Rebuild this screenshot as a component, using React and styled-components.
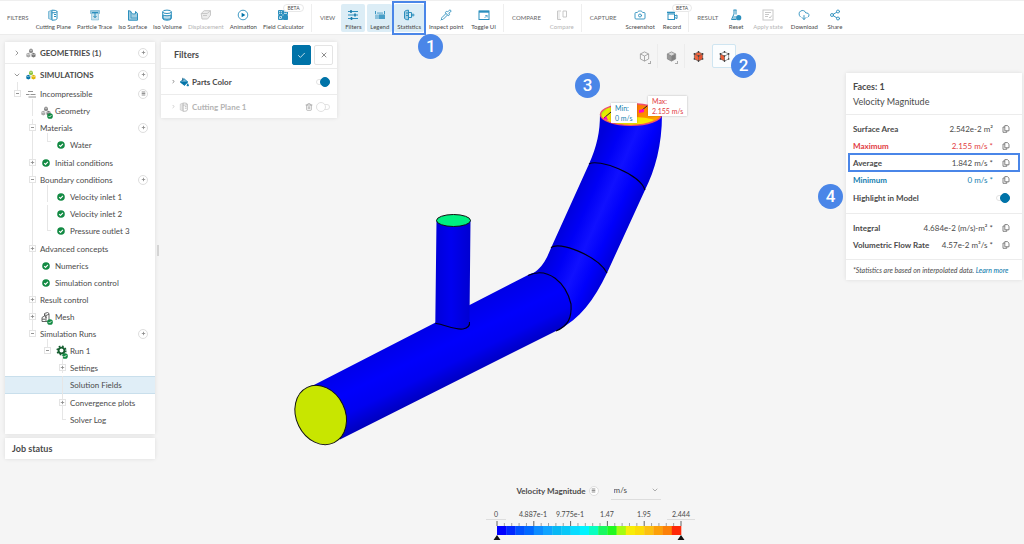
import { useState } from 'react';
import styled, { createGlobalStyle, css } from 'styled-components';
import { Camera, Check, ChevronDown, ChevronRight, CloudDownload, Pipette, Share2, Trash2, X } from 'lucide-react';

const colors = {
  text: '#4a4a4a',
  strong: '#333333',
  muted: '#b4b4b4',
  line: '#ececec',
  primary: '#0073a8',
  icon: '#2b8fbd',
  active: '#dcedf6',
  marker: '#4a86e8',
  danger: '#e23b42',
  ok: '#128a43',
};

const GlobalStyle = createGlobalStyle`
  *, *::before, *::after {
    box-sizing: border-box;
  }
  body {
    margin: 0;
    background: #f5f5f5;
    color: ${colors.text};
    font-family: Lato, 'Liberation Sans', sans-serif;
    font-size: 8px;
    line-height: 10px;
  }
  button, input, select {
    font: inherit;
    color: inherit;
  }
  button {
    padding: 0;
    border: none;
    background: none;
    cursor: pointer;
  }
  ul, dl, dd, p, h2 {
    margin: 0;
    padding: 0;
    list-style: none;
  }
  svg {
    display: block;
    flex: none;
  }
`;

const Page = styled.div`
  display: flex;
  flex-direction: column;
  min-height: 100vh;
`;

/* Toolbar */

const Toolbar = styled.header`
  display: flex;
  align-items: center;
  height: 35px;
  padding-left: 7px;
  background: #ffffff;
  border-top: 1px solid #efefef;
  border-bottom: 1px solid #ececec;
`;

const ToolGroup = styled.div`
  display: flex;
  align-items: center;
  gap: ${(p) => (p.$tight ? '0' : '2px')};
  padding-right: 4px;
  margin-right: 8px;
  border-right: 1px solid #eeeeee;
  &:last-child {
    border-right: none;
  }
`;

const GroupName = styled.span`
  margin-right: 4px;
  font-size: 6px;
  color: #666666;
`;

const ToolButton = styled.button`
  position: relative;
  display: flex;
  flex-direction: column;
  align-items: center;
  gap: 1px;
  min-width: 24px;
  height: 28px;
  padding: 5px 3px 0;
  border-radius: 2px;
  font-size: 6px;
  line-height: 10px;
  white-space: nowrap;
  color: ${(p) => (p.disabled ? colors.muted : colors.text)};
  background: ${(p) => (p.$active ? colors.active : 'transparent')};
  svg {
    color: ${(p) => (p.disabled ? '#c8c8c8' : colors.icon)};
  }
  ${(p) =>
    p.$marked &&
    css`
      &::after {
        content: '';
        position: absolute;
        inset: -3px -2px;
        border: 2px solid ${colors.marker};
      }
    `}
`;

const Beta = styled.span`
  position: absolute;
  top: 0;
  left: 50%;
  padding: 0 3px;
  border: 1px solid #e8e8e8;
  border-radius: 4px;
  background: #ffffff;
  font-size: 5px;
  line-height: 6px;
  color: ${colors.text};
`;

const Marker = styled.span`
  position: absolute;
  z-index: 5;
  top: ${(p) => p.$top}px;
  left: ${(p) => p.$left}px;
  width: 25px;
  height: 25px;
  border-radius: 50%;
  background: ${colors.marker};
  color: #ffffff;
  font-family: Roboto, sans-serif;
  font-size: 17px;
  font-weight: 500;
  line-height: 25px;
  text-align: center;
`;

/* Workspace */

const Workspace = styled.main`
  position: relative;
  flex: 1;
  display: flex;
  align-items: stretch;
  padding: 7px 2px 3px 5px;
`;

const SidebarColumn = styled.div`
  position: relative;
  display: flex;
  align-items: center;
  align-self: flex-start;
`;

const Sidebar = styled.aside`
  display: flex;
  flex-direction: column;
  gap: 4px;
  width: 150px;
`;

const Handle = styled.div`
  width: 2px;
  height: 11px;
  margin: 0 2px;
  border-left: 1px solid #d4d4d4;
  border-right: 1px solid #d4d4d4;
`;

const Card = styled.section`
  background: #ffffff;
  box-shadow: 0 0 4px rgba(0, 0, 0, 0.1);
`;

const SideHeader = styled.div`
  display: flex;
  align-items: center;
  height: ${(p) => (p.$line ? '22px' : '21px')};
  padding: 0 7px 0 8px;
  border-bottom: ${(p) => (p.$line ? `1px solid ${colors.line}` : 'none')};
  font-size: 8px;
  font-weight: 700;
  color: ${colors.text};
`;

const HeaderIcon = styled.span`
  display: flex;
  justify-content: center;
  width: 10px;
  margin: 0 4px 0 5px;
`;

const RoundButton = styled.button`
  display: flex;
  align-items: center;
  justify-content: center;
  width: 10px;
  height: 10px;
  margin-left: ${(p) => (p.$inline ? '0' : 'auto')};
  border: 1px solid #dedede;
  border-radius: 50%;
  background: #ffffff;
`;

const Tree = styled.ul`
  && {
    padding-bottom: ${(p) => (p.$root ? '3px' : '1px')};
  }
`;

const TreeItem = styled.li`
  position: relative;
  &::before {
    content: '';
    position: absolute;
    top: ${(p) => (p.$first ? '-3px' : '0')};
    left: ${(p) => 12 + p.$level * 15}px;
    width: 4px;
    height: ${(p) => (p.$last ? '9px' : '100%')};
    border-left: 1px solid #e6e6e6;
    border-bottom: ${(p) => (p.$last ? '1px solid #e6e6e6' : 'none')};
  }
`;

const TreeRow = styled.div`
  display: flex;
  align-items: center;
  min-height: 17px;
  padding-left: ${(p) => 9 + p.$level * 15}px;
  padding-right: 7px;
  white-space: nowrap;
  ${(p) =>
    p.$selected &&
    css`
      background: #e0eef7;
      border-top: 1px solid #c9dfec;
      border-bottom: 1px solid #c9dfec;
      min-height: 18px;
    `}
`;

const Expander = styled.button`
  position: relative;
  display: flex;
  align-items: center;
  justify-content: center;
  width: 7px;
  height: 7px;
  margin-right: 4px;
  border: 1px solid #e4e4e4;
  background: #ffffff;
`;

const ExpanderGap = styled.span`
  width: 11px;
`;

const ItemIcon = styled.span`
  position: relative;
  display: flex;
  justify-content: center;
  width: 12px;
  margin-right: 3px;
`;

const StatusDot = styled.span`
  position: absolute;
  right: -1px;
  bottom: -3px;
`;

const JobStatus = styled(Card)`
  padding: 6px 7px 5px;
  font-size: 9px;
  font-weight: 700;
`;

/* Stage */

const Stage = styled.div`
  position: relative;
  flex: 1;
  display: flex;
  flex-direction: column;
  justify-content: space-between;
`;

const StageTop = styled.div`
  display: flex;
  align-items: flex-start;
`;

const FiltersCard = styled(Card)`
  width: 176px;
`;

const FiltersHeader = styled.div`
  display: flex;
  align-items: center;
  gap: 3px;
  height: 27px;
  padding: 0 4px 0 13px;
  border-bottom: 1px solid ${colors.line};
`;

const FiltersTitle = styled.h2`
  flex: 1;
  font-size: 9px;
  font-weight: 700;
  color: ${colors.text};
`;

const SquareButton = styled.button`
  display: flex;
  align-items: center;
  justify-content: center;
  width: 19px;
  height: 20px;
  border: 1px solid ${(p) => (p.$primary ? colors.primary : '#e4e4e4')};
  border-radius: 2px;
  background: ${(p) => (p.$primary ? colors.primary : '#ffffff')};
  color: ${(p) => (p.$primary ? '#ffffff' : '#555555')};
`;

const FilterRow = styled.div`
  display: flex;
  align-items: center;
  gap: 3px;
  height: 25px;
  padding: 0 7px 0 10px;
  color: ${(p) => (p.$off ? colors.muted : colors.text)};
  & + & {
    height: 24px;
    border-top: 1px solid ${colors.line};
  }
`;

const FilterName = styled.label`
  flex: 1;
  font-size: 8px;
  font-weight: 700;
`;

const Switch = styled.input`
  appearance: none;
  position: relative;
  width: 14px;
  height: 10px;
  margin: 0;
  &::before {
    content: '';
    position: absolute;
    inset: 2px 0;
    border: 1px solid #e2e2e2;
    border-radius: 3px;
  }
  &::after {
    content: '';
    position: absolute;
    top: 0;
    left: 0;
    width: 10px;
    height: 10px;
    border: 1px solid #e2e2e2;
    border-radius: 50%;
    background: #ffffff;
  }
  &:checked::after {
    left: 4px;
    border-color: ${colors.primary};
    background: ${colors.primary};
  }
`;

const ViewModes = styled.div`
  display: flex;
  margin-left: auto;
  margin-right: 110px;
  padding-top: 2px;
`;

const ModeButton = styled.button`
  position: relative;
  display: flex;
  align-items: center;
  justify-content: center;
  width: 27px;
  height: 24px;
  border-right: 1px solid ${(p) => (p.$last ? 'transparent' : '#ececec')};
  ${(p) =>
    p.$active &&
    css`
      width: 24px;
      border: 1px solid #cfe5f1;
      border-radius: 2px;
      background: #fbfdfe;
    `}
`;

const MoreCorner = styled.span`
  position: absolute;
  right: 6px;
  bottom: 4px;
  width: 3px;
  height: 3px;
  border-right: 1px solid #aaaaaa;
  border-bottom: 1px solid #aaaaaa;
`;

const StatsCard = styled(Card)`
  position: relative;
  width: 176px;
  margin-top: 31px;
`;

const StatsHead = styled.div`
  display: grid;
  gap: 4px;
  padding: 8px 7px 7px;
  font-size: 9px;
  line-height: 11px;
`;

const StatsTitle = styled.h2`
  font-size: 9px;
  font-weight: 700;
`;

const StatsBody = styled.div`
  padding: 5px 3px 6px;
  border-top: 1px solid ${colors.line};
`;

const StatRow = styled.div`
  display: flex;
  align-items: center;
  height: ${(p) => (p.$tall ? '19px' : '17px')};
  padding: 0 9px 0 4px;
  white-space: nowrap;
  color: ${(p) => p.$color || colors.text};
  outline: ${(p) => (p.$marked ? `2px solid ${colors.marker}` : 'none')};
  outline-offset: -1px;
`;

const StatName = styled.span`
  flex: 1;
  font-weight: 700;
`;

const CopyButton = styled.button`
  margin-left: 9px;
  color: #666666;
`;

const StatsNote = styled.p`
  padding: 5px 7px 5px;
  border-top: 1px solid ${colors.line};
  font-size: 7px;
  line-height: 10px;
  font-style: italic;
  a {
    color: ${colors.primary};
    text-decoration: none;
  }
`;

/* Scene */

const Scene = styled.svg`
  position: absolute;
  inset: 0;
  width: 100%;
  height: 100%;
`;

const ValueTag = styled.div`
  position: absolute;
  top: ${(p) => p.$top}px;
  left: ${(p) => p.$left}px;
  padding: 0 4px;
  background: #ffffff;
  box-shadow: 0 0 2px rgba(0, 0, 0, 0.25);
  color: ${(p) => p.$color};
  font-size: 7px;
  line-height: 10px;
`;

/* Legend */

const Legend = styled.section`
  position: relative;
  display: flex;
  flex-direction: column;
  align-items: center;
  margin-right: 6px;
`;

const LegendTitle = styled.div`
  display: flex;
  align-items: center;
  gap: 3px;
  height: 19px;
  margin-bottom: 9px;
  font-weight: 700;
`;

const UnitBox = styled.span`
  position: relative;
  width: 50px;
  margin-left: 9px;
  border-bottom: 1px solid #dddddd;
  font-weight: 400;
  svg {
    position: absolute;
    top: 5px;
    right: 2px;
    color: #888888;
    pointer-events: none;
  }
`;

const UnitSelect = styled.select`
  appearance: none;
  width: 100%;
  height: 18px;
  padding: 0 3px;
  border: none;
  background: transparent;
`;

const LegendValues = styled.div`
  display: grid;
  grid-template-columns: repeat(6, 37px);
  text-align: center;
  font-size: 7px;
  line-height: 10px;
`;

const BoundInput = styled.input`
  justify-self: center;
  width: ${(p) => p.$width}px;
  height: 11px;
  padding: 0;
  border: none;
  border-bottom: 1px solid #dddddd;
  background: transparent;
  text-align: center;
`;

/* Icons */

const PlusGlyph = () => (
  <svg width="5" height="5" viewBox="0 0 5 5" stroke="#888" strokeWidth="0.800">
    <path d="M2.500 0.800v3.400M0.800 2.500h3.400" />
  </svg>
);

const MinusGlyph = () => (
  <svg width="5" height="5" viewBox="0 0 5 5" stroke="#888" strokeWidth="0.900">
    <path d="M1 2.500h3" />
  </svg>
);

const MenuGlyph = () => (
  <svg width="5" height="5" viewBox="0 0 5 5" stroke="#777" strokeWidth="0.800">
    <path d="M0.700 1h3.600M0.700 2.500h3.600M0.700 4h3.600" />
  </svg>
);

const CheckDot = ({ size = 8 }) => (
  <svg width={size} height={size} viewBox="0 0 8 8">
    <circle cx="4" cy="4" r="3.800" fill={colors.ok} />
    <path d="M2.200 4.100l1.300 1.300 2.400-2.600" fill="none" stroke="#fff" strokeWidth="1.100" />
  </svg>
);

const CopyIcon = () => (
  <svg width="8" height="8" viewBox="0 0 8 8" fill="none" stroke="currentColor" strokeWidth="0.800">
    <path d="M2.800 0.600h2.600l1.600 1.600v3.600H2.800zM2.800 2H1v5.300h3.800V5.800" />
  </svg>
);

const Glyph = ({ children, size = 12 }) => (
  <svg width={size} height={size} viewBox="0 0 12 12" fill="none" stroke="currentColor" strokeWidth="1">
    {children}
  </svg>
);

const CuttingPlaneIcon = ({ size }) => (
  <Glyph size={size}>
    <path d="M1.500 2.500l3-1.300v9.600l-3-1.300z" fill="currentColor" fillOpacity="0.350" strokeOpacity="0.500" />
    <path d="M5 1.200c3 0 5 .4 5 1.400v7c0 1-2 1.600-5 1.600zM5 3.800c3 0 5-.4 5-1.200" />
    <path d="M7 5.500h2M7 7.500h2" />
  </Glyph>
);

const ParticleTraceIcon = () => (
  <Glyph>
    <path d="M1.500 1.500h9v3h-9z" fill="currentColor" fillOpacity="0.500" strokeOpacity="0.400" />
    <path d="M2.500 5v6h7V5" fill="currentColor" fillOpacity="0.250" strokeOpacity="0.350" />
    <path d="M3 3.500h6M6 3.500v5M4.500 7L6 8.700 7.500 7" />
  </Glyph>
);

const IsoSurfaceIcon = () => (
  <Glyph>
    <path d="M1.500 1.500v9.700h9V4.300l-2-1.800v2.200C6 5.500 4 4.500 4 2.500z" fill="currentColor" fillOpacity="0.450" />
    <path d="M4 3v6h6" strokeOpacity="0.700" />
  </Glyph>
);

const IsoVolumeIcon = () => (
  <Glyph>
    <ellipse cx="6" cy="2.800" rx="4.300" ry="1.700" />
    <path d="M1.700 2.800v6.600c0 1 1.900 1.800 4.300 1.800s4.300-.8 4.300-1.800V2.800" />
    <path d="M2 6c2 1 6 1 8 0v3.400c-1.500 1.200-6.500 1.200-8 0z" fill="currentColor" fillOpacity="0.300" />
  </Glyph>
);

const DisplacementIcon = () => (
  <Glyph>
    <path d="M1.200 4.500l3-2.800h6.300v4.500l-3 3.800H2z" fill="currentColor" fillOpacity="0.350" />
    <path d="M1.200 4.500h6l3.300-2.800M3 6.500h4" />
  </Glyph>
);

const AnimationIcon = () => (
  <Glyph>
    <circle cx="6" cy="6" r="4.800" strokeWidth="0.900" />
    <path d="M4.600 3.700v4.600L8.400 6z" fill="#0073a8" stroke="none" />
  </Glyph>
);

const CalculatorIcon = () => (
  <Glyph>
    <path d="M1.500 1.500h4v4h-4zM6.500 1.500h4v4h-4zM1.500 6.500h4v4h-4z" fill="currentColor" fillOpacity="0.350" />
    <path d="M6.500 6.500h4v4h-4z" fill="currentColor" />
    <path d="M2.300 3.500h2.400M3.500 2.300v2.400M2.500 7.500l2 2M7.300 3.500h2.400" />
  </Glyph>
);

const SlidersIcon = () => (
  <Glyph>
    <path d="M1 2.500h10M1 6h10M1 9.500h10" strokeWidth="1.100" />
    <path d="M4 1v3M8 4.500v3M4.500 8v3" strokeWidth="1.600" stroke="#1d7aa8" />
  </Glyph>
);

const LegendIcon = () => (
  <Glyph>
    <path d="M1 5.500h10V10H1z" fill="currentColor" stroke="none" fillOpacity="0.450" />
    <path d="M5 5.500h6V10H5z" fill="currentColor" stroke="none" fillOpacity="0.700" />
    <path d="M1.500 5V2M4 5V3.200M6 5V3.200M8 5V3.200M10.500 5V2" strokeWidth="0.900" />
  </Glyph>
);

const StatisticsIcon = () => (
  <Glyph>
    <path d="M5.500 1.200v9.600C3 10.800 1.500 10 1.500 9V3c0-1 1.500-1.800 4-1.800z" fill="currentColor" fillOpacity="0.350" />
    <path d="M3 4h2M3 6.500h2M6 3.500h2.500v5H6M8.500 6h3M10 4.500v3" />
  </Glyph>
);

const ToggleUiIcon = () => (
  <Glyph>
    <rect x="1" y="2" width="10" height="8.500" />
    <path d="M1 2.700h10" strokeWidth="2" />
    <path d="M6.500 9L9 6.500M9.200 8.500v-2h-2" strokeWidth="0.700" />
  </Glyph>
);

const CompareIcon = () => (
  <Glyph>
    <path d="M5 2H1.500v8.500H5M7 2h3.500v6H7z" />
    <path d="M2 3h2v7H2z" fill="currentColor" fillOpacity="0.300" stroke="none" />
  </Glyph>
);

const RecordIcon = () => (
  <Glyph>
    <rect x="2" y="5" width="6.500" height="5.500" />
    <path d="M8.500 7l2.500-1v3.500l-2.500-1" />
    <path d="M1 3.500h8" strokeWidth="1.600" />
  </Glyph>
);

const ResetIcon = () => (
  <Glyph>
    <path d="M3.500 1h3M4 1v4L1.500 10.500h5M6 1v4.500" />
    <path d="M3.500 7h3v3h-4z" fill="currentColor" fillOpacity="0.500" stroke="none" />
    <circle cx="8.700" cy="8.700" r="2.600" fill="currentColor" stroke="none" />
  </Glyph>
);

const ApplyStateIcon = () => (
  <Glyph>
    <rect x="1" y="1" width="10" height="10" />
    <path d="M3 3.500h6M3 5.500h4M3 7.500h3M7 8l1 1 1.800-2.500" />
  </Glyph>
);

const CubesIcon = ({ top = '#8a8a8a', left = '#a8a8a8', right = '#777777' }) => (
  <svg width="10" height="10" viewBox="0 0 10 10">
    <path d="M3 1.500l2-1 2 1v2.700l-2 1-2-1z" fill={top} />
    <path d="M0.300 5.800l2-1 2 1v2.700l-2 1-2-1z" fill={left} />
    <path d="M5.500 5.800l2-1 2 1v2.700l-2 1-2-1z" fill={right} />
    <path d="M3 1.500l2 1 2-1M0.300 5.800l2 1 2-1M5.500 5.800l2 1 2-1" fill="none" stroke="#fff" strokeWidth="0.500" />
  </svg>
);

const FlowIcon = () => (
  <svg width="10" height="8" viewBox="0 0 10 8" stroke="#888" strokeWidth="0.900">
    <path d="M2 1.500h5M0 4.500h3.500M4.500 4.500h5M2.500 7h7.500" />
  </svg>
);

const MeshIcon = () => (
  <svg width="10" height="10" viewBox="0 0 10 10" fill="none" stroke="#555" strokeWidth="0.900">
    <path d="M3.500 4V1.500l3-1 1.500 1v7l-2 1H1V5.500L3.500 4l1.500 1v4M3.500 2.500L5 3.500 8 2.200M5 3.500V6M1 7.200h3.500" />
  </svg>
);

const GearIcon = () => (
  <svg width="11" height="11" viewBox="0 0 12 12" fill="none" stroke="#135c2e">
    <circle cx="6" cy="6" r="3.200" strokeWidth="2" />
    <circle cx="6" cy="6" r="4.800" strokeWidth="1.500" strokeDasharray="1.900 1.870" />
  </svg>
);

const BucketIcon = () => (
  <svg width="10" height="10" viewBox="0 0 12 12" fill="none" stroke={colors.primary}>
    <path d="M1.500 6l4.500-4 4.500 4-4 4z" fill="#7db9d6" />
    <path d="M2 6h8l-3.500 3.500z" fill={colors.primary} />
    <path d="M4.500 1v3.500" stroke="#0b4f74" />
    <path d="M10.500 8l1 2.500h-2z" fill={colors.primary} />
  </svg>
);

const CubeIcon = ({ top, left, right, edge = '#999999', dots }) => (
  <svg width="11" height="11" viewBox="0 0 12 12">
    <path d="M6 1l4.500 2.200L6 5.500 1.500 3.200z" fill={top} />
    <path d="M1.500 3.200L6 5.500V11L1.500 8.700z" fill={left} />
    <path d="M10.500 3.200L6 5.500V11l4.500-2.300z" fill={right} />
    <path
      d="M6 1l4.500 2.200v5.500L6 11 1.500 8.700V3.200zM1.500 3.200L6 5.500l4.500-2.300M6 5.500V11"
      fill="none"
      stroke={edge}
      strokeWidth={dots ? 0.6 : 0.9}
    />
    {dots &&
      [[6, 1], [10.5, 3.2], [10.5, 8.7], [6, 11], [1.5, 8.7], [1.5, 3.2], [6, 5.5]].map(([x, y]) => (
        <circle key={`${x}-${y}`} cx={x} cy={y} r="0.900" fill="#333" />
      ))}
  </svg>
);

/* Data */

const lucide = (Icon, size = 12) => () => <Icon size={size} strokeWidth={1.8} />;

const toolGroups = [
  {
    name: 'FILTERS',
    tight: true,
    tools: [
      { label: 'Cutting Plane', Icon: CuttingPlaneIcon },
      { label: 'Particle Trace', Icon: ParticleTraceIcon },
      { label: 'Iso Surface', Icon: IsoSurfaceIcon },
      { label: 'Iso Volume', Icon: IsoVolumeIcon },
      { label: 'Displacement', Icon: DisplacementIcon, disabled: true },
      { label: 'Animation', Icon: AnimationIcon },
      { label: 'Field Calculator', Icon: CalculatorIcon, beta: true },
    ],
  },
  {
    name: 'VIEW',
    tools: [
      { label: 'Filters', Icon: SlidersIcon, active: true },
      { label: 'Legend', Icon: LegendIcon, active: true },
      { label: 'Statistics', Icon: StatisticsIcon, active: true, marker: 1 },
      { label: 'Inspect point', Icon: lucide(Pipette) },
      { label: 'Toggle UI', Icon: ToggleUiIcon },
    ],
  },
  { name: 'COMPARE', tools: [{ label: 'Compare', Icon: CompareIcon, disabled: true }] },
  {
    name: 'CAPTURE',
    tools: [
      { label: 'Screenshot', Icon: lucide(Camera) },
      { label: 'Record', Icon: RecordIcon, beta: true },
    ],
  },
  {
    name: 'RESULT',
    tools: [
      { label: 'Reset', Icon: ResetIcon },
      { label: 'Apply state', Icon: ApplyStateIcon, disabled: true },
      { label: 'Download', Icon: lucide(CloudDownload) },
      { label: 'Share', Icon: lucide(Share2) },
    ],
  },
];

const treeData = [
  {
    label: 'Incompressible',
    icon: <FlowIcon />,
    inset: true,
    open: true,
    action: 'menu',
    children: [
      { label: 'Geometry', icon: <CubesIcon />, done: true },
      { label: 'Materials', open: true, action: 'add', children: [{ label: 'Water', icon: <CheckDot /> }] },
      { label: 'Initial conditions', icon: <CheckDot />, open: false },
      {
        label: 'Boundary conditions',
        open: true,
        action: 'add',
        children: [
          { label: 'Velocity inlet 1', icon: <CheckDot /> },
          { label: 'Velocity inlet 2', icon: <CheckDot /> },
          { label: 'Pressure outlet 3', icon: <CheckDot /> },
        ],
      },
      { label: 'Advanced concepts', open: false },
      { label: 'Numerics', icon: <CheckDot /> },
      { label: 'Simulation control', icon: <CheckDot /> },
      { label: 'Result control', open: false },
      { label: 'Mesh', icon: <MeshIcon />, done: true, open: false },
      {
        label: 'Simulation Runs',
        open: true,
        action: 'add',
        children: [
          {
            label: 'Run 1',
            icon: <GearIcon />,
            done: true,
            open: true,
            children: [
              { label: 'Settings', open: false },
              { label: 'Solution Fields', selected: true },
              { label: 'Convergence plots', open: false },
              { label: 'Solver Log' },
            ],
          },
        ],
      },
    ],
  },
];

const fieldStats = [
  { name: 'Surface Area', value: '2.542e-2 m²' },
  { name: 'Maximum', value: '2.155 m/s *', color: colors.danger },
  { name: 'Average', value: '1.842 m/s *', marked: true },
  { name: 'Minimum', value: '0 m/s *', color: '#1580b0' },
];

const integralStats = [
  { name: 'Integral', value: '4.684e-2 (m/s)-m² *' },
  { name: 'Volumetric Flow Rate', value: '4.57e-2 m³/s *' },
];

const scaleColors = [
  '#0000ff', '#0028ff', '#0050ff', '#0068ff', '#0c8cff', '#10a4ff', '#08b8f4', '#08c8f8', '#08dcff', '#00f4ff',
  '#08ffc0', '#18f860', '#20f820', '#a4fc10', '#f8ec08', '#fcdc08', '#fcc010', '#fca008', '#fc8008', '#ff2808',
];

/* Parts */

function ToolbarItem({ tool }) {
  const { label, Icon, active, disabled, beta, marker } = tool;
  return (
    <ToolButton type="button" $active={active} disabled={disabled} $marked={marker}>
      <Icon />
      {label}
      {beta && <Beta>BETA</Beta>}
      {marker && <Marker $top={30} $left={24}>{marker}</Marker>}
    </ToolButton>
  );
}

function TreeNode({ node, level, first, last }) {
  const [open, setOpen] = useState(Boolean(node.open));
  const hasExpander = node.open !== undefined;
  return (
    <TreeItem $level={level} $first={first} $last={last}>
      <TreeRow $level={level} $selected={node.selected}>
        {hasExpander ? (
          <Expander type="button" aria-label={node.label} onClick={() => setOpen(!open)}>
            {open ? <MinusGlyph /> : <PlusGlyph />}
          </Expander>
        ) : (
          <ExpanderGap />
        )}
        {node.icon && (
          <ItemIcon>
            {node.icon}
            {node.done && (
              <StatusDot>
                <CheckDot size={6} />
              </StatusDot>
            )}
          </ItemIcon>
        )}
        {node.label}
        {node.action && (
          <RoundButton type="button" aria-label={node.action}>
            {node.action === 'add' ? <PlusGlyph /> : <MenuGlyph />}
          </RoundButton>
        )}
      </TreeRow>
      {open && node.children && <TreeList nodes={node.children} level={level + 1} />}
    </TreeItem>
  );
}

function TreeList({ nodes, level }) {
  return (
    <Tree $root={level === 0}>
      {nodes.map((node, i) => (
        <TreeNode key={node.label} node={node} level={level} first={i === 0} last={i === nodes.length - 1} />
      ))}
    </Tree>
  );
}

function StatLine({ stat }) {
  return (
    <StatRow $color={stat.color} $marked={stat.marked}>
      <StatName>{stat.name}</StatName>
      <span>{stat.value}</span>
      <CopyButton type="button" aria-label={`Copy ${stat.name}`}>
        <CopyIcon />
      </CopyButton>
    </StatRow>
  );
}

function PipeModel() {
  return (
    <Scene viewBox="0 35 1024 509" aria-hidden="true">
      <defs>
        <linearGradient id="main" gradientUnits="userSpaceOnUse" x1="420" y1="330" x2="447" y2="386">
          <stop offset="0" stopColor="#0000e8" />
          <stop offset="0.400" stopColor="#0000fc" />
          <stop offset="0.700" stopColor="#0000f0" />
          <stop offset="1" stopColor="#0000c0" />
        </linearGradient>
        <linearGradient id="riser" gradientUnits="userSpaceOnUse" x1="570" y1="206" x2="626" y2="231">
          <stop offset="0" stopColor="#0000dc" />
          <stop offset="0.250" stopColor="#0000f6" />
          <stop offset="0.500" stopColor="#1010ff" />
          <stop offset="0.750" stopColor="#0000fc" />
          <stop offset="1" stopColor="#0000d8" />
        </linearGradient>
        <linearGradient id="branch" x1="0" x2="1" y1="0" y2="0">
          <stop offset="0" stopColor="#0000d8" />
          <stop offset="0.450" stopColor="#0000f0" />
          <stop offset="1" stopColor="#0000d0" />
        </linearGradient>
        <linearGradient id="outlet" x1="0" x2="1" y1="0" y2="0.300">
          <stop offset="0" stopColor="#28e820" />
          <stop offset="0.180" stopColor="#e4f000" />
          <stop offset="0.400" stopColor="#ffd000" />
          <stop offset="0.600" stopColor="#ff7800" />
          <stop offset="1" stopColor="#ffa000" />
        </linearGradient>
      </defs>
      <path
        d="M528 276L535 272C543 266 547 258 551 248L589 164C597 146 600 132 600 114L662 114C662 146 655 170 645 190L607 273C594 300 580 319 558 330Z"
        fill="url(#riser)"
      />
      <path d="M312 386L530 274C548 267 566 283 571 304C572 318 568 326 558 330L340 439.500Z" fill="url(#main)" />
      <path d="M436.500 220L435.300 323.300C446 325 454 330 463 329C468 328 470 325 469.500 319L470.500 220Z" fill="url(#branch)" />
      <g fill="none" stroke="#000018" strokeWidth="1.100">
        <path d="M589 164C598 158 640 174 645 190" />
        <path d="M551 248C558 240 598 256 607 273" />
        <path d="M528 275.500C548 266 566 283 571 304C572 318 568 326 556 331" />
        <path d="M435.300 323.300C446 325 454 330 463 329C468 328 470 325 469.500 322" />
      </g>
      <ellipse cx="320.700" cy="415" rx="24.500" ry="30.700" transform="rotate(-26 320.700 415)" fill="#c8e600" stroke="#111" />
      <ellipse cx="453.500" cy="220.500" rx="17" ry="6" fill="#00f080" stroke="#111" />
      <ellipse cx="631" cy="114.500" rx="30.500" ry="10.800" fill="url(#outlet)" stroke="#f0506c" strokeWidth="1.500" />
      <path d="M608 121c12 5 36 5 46-1-10-4-36-4-46 1z" fill="#f8e800" />
      <path d="M604 118l7-6M641 111l6-5" stroke="#222" />
      <path d="M639 110l5-1v3l-5 1zM603 119l3-3 2 4z" fill="#f0c" />
    </Scene>
  );
}

function ColorScale() {
  const step = 184 / scaleColors.length;
  return (
    <svg width="196" height="21" viewBox="0 0 196 21">
      {Array.from({ length: 26 }, (_, i) => (
        <path
          key={i}
          d={`M${6 + i * 7.36} ${i % 5 ? 3 : 1}V6`}
          stroke={i % 5 ? '#999' : '#555'}
          strokeWidth="0.900"
        />
      ))}
      {scaleColors.map((color, i) => (
        <rect key={color} x={6 + i * step} y="6" width={step + 0.3} height="9" fill={color} />
      ))}
      <path d="M6 15l3.500 5h-7zM190 15l3.500 5h-7z" fill="#111" />
    </svg>
  );
}

function App() {
  const [partsColor, setPartsColor] = useState(true);
  const [cuttingPlane, setCuttingPlane] = useState(false);
  const [highlight, setHighlight] = useState(true);

  return (
    <Page>
      <GlobalStyle />
      <Toolbar>
        {toolGroups.map((group) => (
          <ToolGroup key={group.name} $tight={group.tight}>
            <GroupName>{group.name}</GroupName>
            {group.tools.map((tool) => (
              <ToolbarItem key={tool.label} tool={tool} />
            ))}
          </ToolGroup>
        ))}
      </Toolbar>
      <Workspace>
        <PipeModel />
        <SidebarColumn>
          <Sidebar>
            <Card>
              <SideHeader $line>
                <ChevronRight size={8} color="#666" />
                <HeaderIcon>
                  <CubesIcon />
                </HeaderIcon>
                GEOMETRIES (1)
                <RoundButton type="button" aria-label="Add geometry">
                  <PlusGlyph />
                </RoundButton>
              </SideHeader>
              <SideHeader>
                <ChevronDown size={8} color="#666" />
                <HeaderIcon>
                  <CubesIcon top="#8cc63f" left="#0073a8" right="#e0b400" />
                </HeaderIcon>
                SIMULATIONS
                <RoundButton type="button" aria-label="Add simulation">
                  <PlusGlyph />
                </RoundButton>
              </SideHeader>
              <TreeList nodes={treeData} level={0} />
            </Card>
            <JobStatus>Job status</JobStatus>
          </Sidebar>
          <Handle />
        </SidebarColumn>
        <Stage>
          <StageTop>
            <FiltersCard>
              <FiltersHeader>
                <FiltersTitle>Filters</FiltersTitle>
                <SquareButton type="button" aria-label="Apply" $primary>
                  <Check size={9} />
                </SquareButton>
                <SquareButton type="button" aria-label="Close">
                  <X size={8} />
                </SquareButton>
              </FiltersHeader>
              <FilterRow>
                <ChevronRight size={5} strokeWidth={3} />
                <BucketIcon />
                <FilterName htmlFor="parts-color">Parts Color</FilterName>
                <Switch
                  id="parts-color"
                  type="checkbox"
                  checked={partsColor}
                  onChange={() => setPartsColor(!partsColor)}
                />
              </FilterRow>
              <FilterRow $off>
                <ChevronRight size={5} strokeWidth={3} />
                <CuttingPlaneIcon size={10} />
                <FilterName htmlFor="cutting-plane">Cutting Plane 1</FilterName>
                <button type="button" aria-label="Delete">
                  <Trash2 size={8} color="#999" />
                </button>
                <Switch
                  id="cutting-plane"
                  type="checkbox"
                  checked={cuttingPlane}
                  onChange={() => setCuttingPlane(!cuttingPlane)}
                />
              </FilterRow>
            </FiltersCard>
            <ViewModes>
              <ModeButton type="button" aria-label="Wireframe">
                <CubeIcon top="none" left="none" right="none" />
                <MoreCorner />
              </ModeButton>
              <ModeButton type="button" aria-label="Solid">
                <CubeIcon top="#d8d8d8" left="#999999" right="#808080" edge="#888888" />
                <MoreCorner />
              </ModeButton>
              <ModeButton type="button" aria-label="Select volumes" $last>
                <CubeIcon top="#f0643c" left="#f0643c" right="#e85430" edge="#444444" dots />
              </ModeButton>
              <ModeButton type="button" aria-label="Select faces" $active>
                <CubeIcon top="none" left="#ee6038" right="none" edge="#444444" dots />
                <Marker $top={8} $left={18}>2</Marker>
              </ModeButton>
            </ViewModes>
            <StatsCard>
              <Marker $top={111} $left={-28}>4</Marker>
              <StatsHead>
                <StatsTitle>Faces: 1</StatsTitle>
                <p>Velocity Magnitude</p>
              </StatsHead>
              <StatsBody>
                {fieldStats.map((stat) => (
                  <StatLine key={stat.name} stat={stat} />
                ))}
                <StatRow $tall>
                  <StatName as="label" htmlFor="highlight">Highlight in Model</StatName>
                  <Switch
                    id="highlight"
                    type="checkbox"
                    checked={highlight}
                    onChange={() => setHighlight(!highlight)}
                  />
                </StatRow>
              </StatsBody>
              <StatsBody>
                {integralStats.map((stat) => (
                  <StatLine key={stat.name} stat={stat} />
                ))}
              </StatsBody>
              <StatsNote>
                *Statistics are based on interpolated data. <a href="#statistics">Learn more</a>
              </StatsNote>
            </StatsCard>
          </StageTop>
          <Legend>
            <LegendTitle>
              Velocity Magnitude
              <RoundButton type="button" aria-label="Legend settings" $inline>
                <MenuGlyph />
              </RoundButton>
              <UnitBox>
                <UnitSelect aria-label="Unit" defaultValue="m/s">
                  <option>m/s</option>
                  <option>km/h</option>
                </UnitSelect>
                <ChevronDown size={8} />
              </UnitBox>
            </LegendTitle>
            <LegendValues>
              <BoundInput aria-label="Lower bound" defaultValue="0" $width={20} />
              <span>4.887e-1</span>
              <span>9.775e-1</span>
              <span>1.47</span>
              <span>1.95</span>
              <BoundInput aria-label="Upper bound" defaultValue="2.444" $width={28} />
            </LegendValues>
            <ColorScale />
          </Legend>
          <Marker $top={31} $left={414}>3</Marker>
          <ValueTag $top={61} $left={450} $color="#1580b0">
            Min:
            <br />0 m/s
          </ValueTag>
          <ValueTag $top={54} $left={487} $color={colors.danger}>
            Max:
            <br />
            2.155 m/s
          </ValueTag>
        </Stage>
      </Workspace>
    </Page>
  );
}

export default App;
